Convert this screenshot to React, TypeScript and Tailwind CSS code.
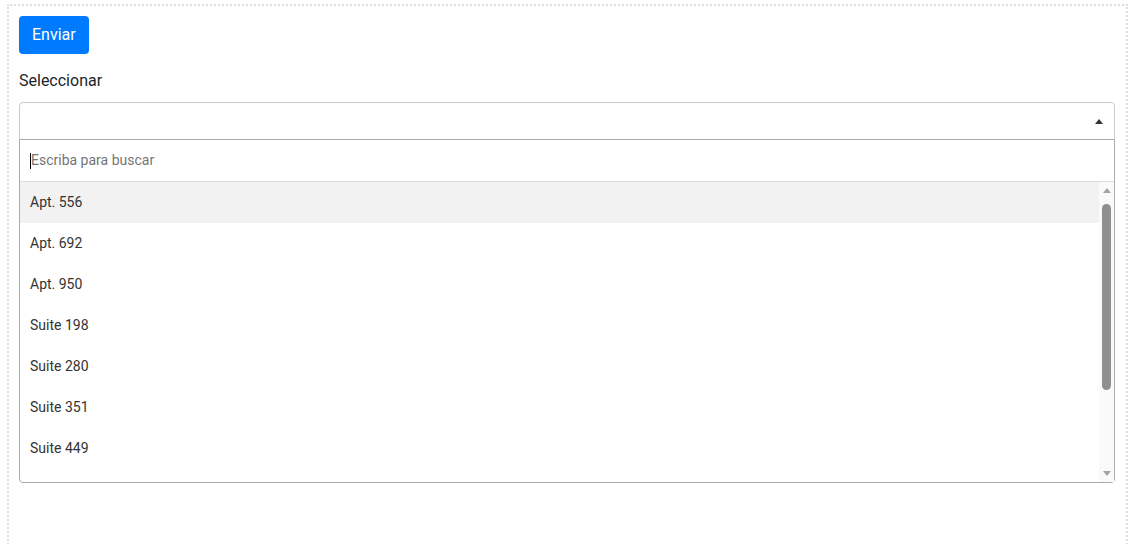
import React from "react";

const options = [
  "Apt. 556",
  "Apt. 692",
  "Apt. 950",
  "Suite 198",
  "Suite 280",
  "Suite 351",
  "Suite 449",
];

export default function App() {
  return (
    <div className="bg-white w-[1134px] h-[544px] overflow-hidden" style={{ fontFamily: 'Roboto, "Noto Sans", sans-serif' }}>
      <div className="ml-[7px] mt-[4px] w-[1121px] h-[600px] border-2 border-dotted border-[#dddddd] px-[10px] pt-[10px]">
        <button className="h-[38px] px-[13px] rounded-[4px] bg-[#007bff] text-white text-[16px] leading-[38px]">
          Enviar
        </button>
        <div className="mt-[15px] mb-[9px] text-[16px] leading-[24px] text-[#212529]">Seleccionar</div>
        <div className="w-[1096px]">
          <div className="h-[38px] border border-[#cccccc] rounded-t-[4px] flex items-center justify-end pr-[11px]">
            <div className="w-0 h-0 border-l-[4px] border-r-[4px] border-b-[5px] border-l-transparent border-r-transparent border-b-[#333333]" />
          </div>
          <div className="-mt-px border border-[#aaaaaa] rounded-b-[4px] bg-white">
            <div className="h-[42px] border-b border-[#dddddd] flex items-center pl-[10px]">
              <span className="w-px h-[16px] bg-black" />
              <span className="text-[14px] text-[#757575]">Escriba para buscar</span>
            </div>
            <div className="h-[300px] flex">
              <div className="flex-1 overflow-hidden">
                {options.map((o, i) => (
                  <div
                    key={o}
                    className={`h-[41px] flex items-center pl-[10px] text-[14px] text-[#333333] ${i === 0 ? "bg-[#f2f2f2]" : ""}`}
                  >
                    {o}
                  </div>
                ))}
              </div>
              <div className="w-[15px] bg-[#fafafa] flex flex-col items-center">
                <div className="h-[15px] flex items-center justify-center pt-[1px]">
                  <div className="w-0 h-0 border-l-[4px] border-r-[4px] border-b-[5px] border-l-transparent border-r-transparent border-b-[#a3a3a3]" />
                </div>
                <div className="mt-[7px] w-[9px] h-[186px] rounded-[5px] bg-[#8f8f8f]" />
                <div className="flex-1" />
                <div className="h-[15px] flex items-center justify-center pb-[2px]">
                  <div className="w-0 h-0 border-l-[4px] border-r-[4px] border-t-[5px] border-l-transparent border-r-transparent border-t-[#a3a3a3]" />
                </div>
              </div>
            </div>
          </div>
        </div>
      </div>
    </div>
  );
}
